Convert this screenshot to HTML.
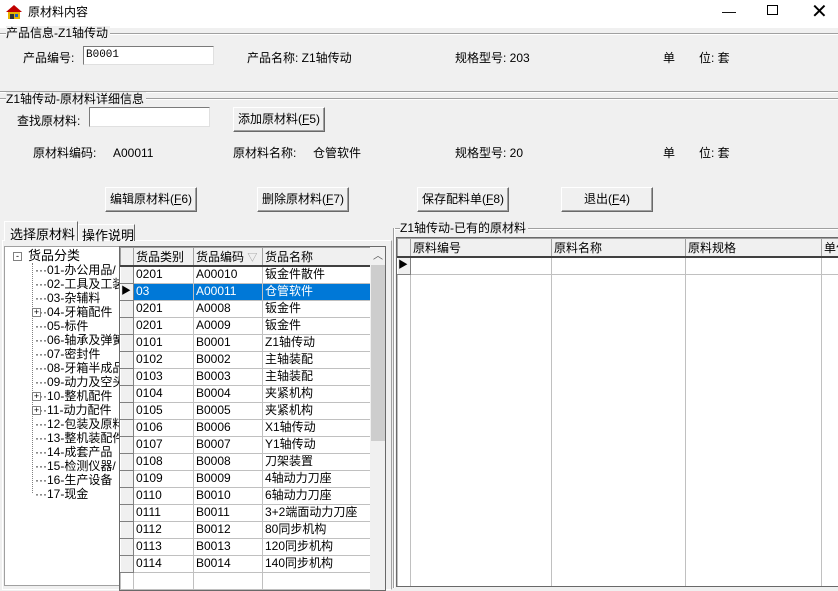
<!DOCTYPE html>
<html><head><meta charset="utf-8"><style>
*{margin:0;padding:0;box-sizing:border-box}
body{width:838px;height:583px;background:#f0f0f0;font-family:"Liberation Sans","Noto Sans CJK SC","WenQuanYi Zen Hei",sans-serif;font-size:12px;color:#000;position:relative;overflow:hidden}
.a{position:absolute;white-space:nowrap;line-height:14px}
.hl{position:absolute;height:2px;border-top:1px solid #a0a0a0;border-bottom:1px solid #fff}
.inp{position:absolute;background:#fff;border:1px solid #7a7a7a;border-right-color:#e0e0e0;border-bottom-color:#e0e0e0}
.btn{position:absolute;background:#f0f0f0;border:1px solid;border-color:#fff #696969 #696969 #fff;box-shadow:inset -1px -1px 0 #a0a0a0;text-align:center;line-height:22px}
.grid{position:absolute;background:#fff;border:1px solid #696969;overflow:hidden}
table{border-collapse:collapse;font-size:12px;table-layout:fixed}
td{border:1px solid #c0c0c0;height:17px;padding:0 2px;white-space:nowrap;overflow:hidden;line-height:15px}
th{font-weight:normal;text-align:left;background:#f0f0f0;border:1px solid #a0a0a0;border-bottom:2px solid #404040;height:17px;padding:0 2px;white-space:nowrap;overflow:hidden}
td.ind{background:#f0f0f0;border:1px solid;border-color:#fff #808080 #808080 #fff;padding:0}
tr.sel td{background:#0078d7;color:#fff}
tr.sel td.ind{background:#f0f0f0;color:#000}
</style></head><body>
<div style="position:absolute;left:0;top:0;width:838px;height:28px;background:#fff"></div>
<svg class="a" style="left:5px;top:3px" width="18" height="18" viewBox="0 0 18 18"><path d="M1 9 L9 2 L17 9 Z" fill="#c00000"/><rect x="3" y="9" width="12" height="7" fill="#e8b400"/><rect x="5" y="11" width="4" height="5" fill="#333"/><rect x="10" y="11" width="3" height="3" fill="#2060c0"/></svg>
<div class="a" style="left:28px;top:5px">原材料内容</div>
<div class="a" style="left:722px;top:4px;font-size:14px">—</div>
<div class="a" style="left:767px;top:5px;width:11px;height:10px;border:1px solid #000"></div>
<div class="a" style="left:811px;top:0px;font-size:20px;line-height:24px">✕</div>

<div class="hl" style="left:0;top:33px;width:838px"></div>
<div class="a" style="left:6px;top:26px;background:#f0f0f0;padding-right:2px">产品信息-Z1轴传动</div>
<div class="a" style="left:23px;top:51px">产品编号:</div>
<div class="inp" style="left:83px;top:46px;width:131px;height:19px"><span class="a" style="left:2px;top:1px;font-family:'Liberation Mono',monospace;font-size:11px">B0001</span></div>
<div class="a" style="left:247px;top:51px">产品名称: Z1轴传动</div>
<div class="a" style="left:455px;top:51px">规格型号: 203</div>
<div class="a" style="left:663px;top:51px">单</div>
<div class="a" style="left:699px;top:51px">位: 套</div>

<div class="hl" style="left:0;top:91px;width:838px"></div>
<div class="hl" style="left:0;top:98px;width:838px"></div>
<div class="a" style="left:6px;top:92px;background:#f0f0f0;padding-right:2px">Z1轴传动-原材料详细信息</div>
<div class="a" style="left:17px;top:114px">查找原材料:</div>
<div class="inp" style="left:89px;top:107px;width:121px;height:20px"></div>
<div class="btn" style="left:233px;top:107px;width:92px;height:25px">添加原材料(<u>F</u>5)</div>
<div class="a" style="left:33px;top:146px">原材料编码:</div>
<div class="a" style="left:113px;top:146px">A00011</div>
<div class="a" style="left:233px;top:146px">原材料名称:</div>
<div class="a" style="left:313px;top:146px">仓管软件</div>
<div class="a" style="left:455px;top:146px">规格型号: 20</div>
<div class="a" style="left:663px;top:146px">单</div>
<div class="a" style="left:699px;top:146px">位: 套</div>
<div class="btn" style="left:105px;top:187px;width:92px;height:25px">编辑原材料(<u>F</u>6)</div>
<div class="btn" style="left:257px;top:187px;width:92px;height:25px">删除原材料(<u>F</u>7)</div>
<div class="btn" style="left:417px;top:187px;width:92px;height:25px">保存配料单(<u>F</u>8)</div>
<div class="btn" style="left:561px;top:187px;width:92px;height:25px">退出(<u>F</u>4)</div>

<!-- left tab panel -->
<div style="position:absolute;left:2px;top:240px;width:390px;height:350px;border:1px solid #fff;border-right-color:#a0a0a0"></div>
<div style="position:absolute;left:4px;top:221px;width:74px;height:20px;background:#f0f0f0;border:1px solid #fff;border-right-color:#696969;border-bottom:none;padding:2px 0 0 5px;font-size:13px">选择原材料</div>
<div style="position:absolute;left:78px;top:224px;width:57px;height:17px;border:1px solid #fff;border-right-color:#696969;border-bottom:none;padding:0 0 0 3px;font-size:13px">操作说明</div>

<div style="position:absolute;left:4px;top:246px;width:116px;height:340px;background:#fff;border:1px solid #a0a0a0;overflow:hidden;font-size:13px">
<div class="a" style="left:8px;top:5px;width:9px;height:9px;border:1px solid #808080;font-size:9px;line-height:7px;text-align:center">-</div>
<div class="a" style="left:23px;top:2px">货品分类</div>
<div style="position:absolute;left:27px;top:16px;height:230px;border-left:1px dotted #808080"></div>
<div style="font-size:12px">
<div class="a" style="left:30px;top:16px">···01-办公用品/</div>
<div class="a" style="left:30px;top:30px">···02-工具及工装</div>
<div class="a" style="left:30px;top:44px">···03-杂辅料</div>
<div class="a" style="left:30px;top:58px">···04-牙箱配件</div>
<div class="a" style="left:30px;top:72px">···05-标件</div>
<div class="a" style="left:30px;top:86px">···06-轴承及弹簧</div>
<div class="a" style="left:30px;top:100px">···07-密封件</div>
<div class="a" style="left:30px;top:114px">···08-牙箱半成品</div>
<div class="a" style="left:30px;top:128px">···09-动力及空头</div>
<div class="a" style="left:30px;top:142px">···10-整机配件</div>
<div class="a" style="left:30px;top:156px">···11-动力配件</div>
<div class="a" style="left:30px;top:170px">···12-包装及原料</div>
<div class="a" style="left:30px;top:184px">···13-整机装配件</div>
<div class="a" style="left:30px;top:198px">···14-成套产品</div>
<div class="a" style="left:30px;top:212px">···15-检测仪器/</div>
<div class="a" style="left:30px;top:226px">···16-生产设备</div>
<div class="a" style="left:30px;top:240px">···17-现金</div>
</div>
<div class="a" style="left:27px;top:61px;width:9px;height:9px;border:1px solid #808080;background:#fff;font-size:9px;line-height:7px;text-align:center">+</div>
<div class="a" style="left:27px;top:145px;width:9px;height:9px;border:1px solid #808080;background:#fff;font-size:9px;line-height:7px;text-align:center">+</div>
<div class="a" style="left:27px;top:159px;width:9px;height:9px;border:1px solid #808080;background:#fff;font-size:9px;line-height:7px;text-align:center">+</div>
</div>

<div class="grid" style="left:119px;top:246px;width:267px;height:345px">
<table style="width:251px"><colgroup><col style="width:13px"><col style="width:60px"><col style="width:69px"><col style="width:109px"></colgroup>
<tr><th></th><th>货品类别</th><th>货品编码 <span style="color:#999;font-size:10px">▽</span></th><th>货品名称</th></tr>
<tr><td class="ind"></td><td>0201</td><td>A00010</td><td>钣金件散件</td></tr>
<tr class="sel"><td class="ind" style="font-size:10px">▶</td><td>03</td><td>A00011</td><td>仓管软件</td></tr>
<tr><td class="ind"></td><td>0201</td><td>A0008</td><td>钣金件</td></tr>
<tr><td class="ind"></td><td>0201</td><td>A0009</td><td>钣金件</td></tr>
<tr><td class="ind"></td><td>0101</td><td>B0001</td><td>Z1轴传动</td></tr>
<tr><td class="ind"></td><td>0102</td><td>B0002</td><td>主轴装配</td></tr>
<tr><td class="ind"></td><td>0103</td><td>B0003</td><td>主轴装配</td></tr>
<tr><td class="ind"></td><td>0104</td><td>B0004</td><td>夹紧机构</td></tr>
<tr><td class="ind"></td><td>0105</td><td>B0005</td><td>夹紧机构</td></tr>
<tr><td class="ind"></td><td>0106</td><td>B0006</td><td>X1轴传动</td></tr>
<tr><td class="ind"></td><td>0107</td><td>B0007</td><td>Y1轴传动</td></tr>
<tr><td class="ind"></td><td>0108</td><td>B0008</td><td>刀架装置</td></tr>
<tr><td class="ind"></td><td>0109</td><td>B0009</td><td>4轴动力刀座</td></tr>
<tr><td class="ind"></td><td>0110</td><td>B0010</td><td>6轴动力刀座</td></tr>
<tr><td class="ind"></td><td>0111</td><td>B0011</td><td>3+2端面动力刀座</td></tr>
<tr><td class="ind"></td><td>0112</td><td>B0012</td><td>80同步机构</td></tr>
<tr><td class="ind"></td><td>0113</td><td>B0013</td><td>120同步机构</td></tr>
<tr><td class="ind"></td><td>0114</td><td>B0014</td><td>140同步机构</td></tr>
<tr><td class="ind" style="background:#fff;border-color:#c0c0c0"></td><td></td><td></td><td></td></tr>
</table>
<div style="position:absolute;left:250px;top:0;width:16px;height:345px;background:#f0f0f0"></div>
<div class="a" style="left:253px;top:3px;font-size:10px;color:#555">︿</div>
<div style="position:absolute;left:251px;top:18px;width:14px;height:176px;background:#cdcdcd"></div>
</div>

<!-- right -->
<div class="hl" style="left:394px;top:228px;width:444px"></div>
<div style="position:absolute;left:393px;top:228px;width:2px;height:360px;border-left:1px solid #a0a0a0;border-right:1px solid #fff"></div>
<div class="a" style="left:400px;top:221px;background:#f0f0f0;padding-right:2px">Z1轴传动-已有的原材料</div>
<div class="grid" style="left:396px;top:237px;width:445px;height:350px">
<table style="width:460px"><colgroup><col style="width:13px"><col style="width:141px"><col style="width:134px"><col style="width:136px"><col style="width:36px"></colgroup>
<tr><th></th><th>原料编号</th><th>原料名称</th><th>原料规格</th><th>单位</th></tr>
<tr><td class="ind" style="font-size:10px">▶</td><td></td><td></td><td></td><td></td></tr>
<tr><td class="ind" style="background:#fff;border-color:#c0c0c0;height:340px"></td><td></td><td></td><td></td><td></td></tr>
</table>
</div>
</body></html>
